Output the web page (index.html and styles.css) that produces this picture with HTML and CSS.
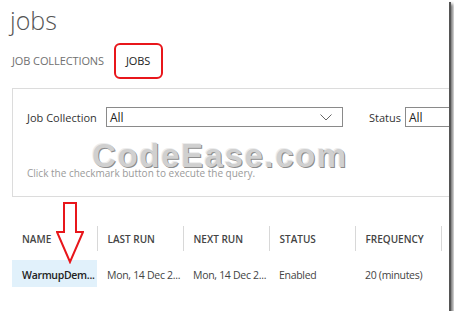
FILE: index.html
```html
<!DOCTYPE html>
<html lang="en">
<head>
  <meta charset="UTF-8">
  <title>jobs</title>
  <link rel="stylesheet" href="styles.css">
</head>
<body>
  <div class="frame">
    <h1 class="title">jobs</h1>

    <div class="tabs">
      <span class="tab">JOB COLLECTIONS</span>
      <span class="tab active">JOBS</span>
    </div>

    <div class="filter">
      <div class="filter-row">
        <label class="filter-label">Job Collection</label>
        <div class="select wide">
          <span>All</span>
          <svg class="chevron" width="12" height="7" viewBox="0 0 12 7"><path d="M0.5 0.5 L6 6 L11.5 0.5" fill="none" stroke="#666" stroke-width="1"/></svg>
        </div>
        <label class="filter-label status-label">Status</label>
        <div class="select narrow"><span>All</span></div>
      </div>
      <div class="watermark">CodeEase.com</div>
      <p class="hint">Click the checkmark button to execute the query.</p>
    </div>

    <div class="table-wrap">
      <svg class="arrow" width="28" height="62" viewBox="0 0 28 62">
        <path d="M8 1 H20 V30 H27 L14 60 L1 30 H8 Z" fill="none" stroke="#e8161b" stroke-width="2" stroke-linejoin="miter"/>
      </svg>
      <table class="jobs">
        <colgroup>
          <col class="col-first">
          <col class="col">
          <col class="col">
          <col class="col">
          <col class="col-last">
        </colgroup>
        <thead>
          <tr>
            <th>NAME</th>
            <th>LAST RUN</th>
            <th>NEXT RUN</th>
            <th>STATUS</th>
            <th>FREQUENCY</th>
          </tr>
        </thead>
        <tbody>
          <tr>
            <td class="selected">WarmupDem...</td>
            <td>Mon, 14 Dec 2...</td>
            <td>Mon, 14 Dec 2...</td>
            <td>Enabled</td>
            <td>20 (minutes)</td>
          </tr>
        </tbody>
      </table>
    </div>
  </div>
</body>
</html>
```

FILE: styles.css
```css
body {
  margin: 0;
  background: #fff;
  font-family: "Open Sans", "Noto Sans", Arial, sans-serif;
  color: #444;
  overflow: hidden;
}
.frame {
  width: 449px;
  height: 311px;
  background: #fff;
  box-shadow: 2px 2px 0 #555, 4px 4px 3px rgba(0, 0, 0, 0.55);
  overflow: hidden;
}
.title {
  margin: 0;
  padding: 2px 0 0 10px;
  height: 41px;
  font-size: 25px;
  font-weight: 300;
  line-height: 36px;
  color: #555;
}
.tabs {
  display: flex;
  align-items: center;
  gap: 10px;
  padding-left: 12px;
  height: 36px;
}
.tab {
  font-size: 11px;
  line-height: 14px;
  color: #707070;
  letter-spacing: -0.1px;
}
.tab.active {
  color: #222;
  border: 2px solid #e8161b;
  border-radius: 6px;
  padding: 9px 11px 9px 10px;
}
.filter {
  margin: 9px 0 0 12px;
  border: 1px solid #dcdcdc;
  border-right: none;
  height: 109px;
  padding: 18px 0 0 14px;
  box-sizing: border-box;
}
.filter-row {
  display: flex;
  align-items: center;
  height: 20px;
}
.filter-label {
  font-size: 11px;
  color: #333;
  width: 79px;
}
.status-label {
  width: 36px;
  margin-left: 26px;
}
.select {
  height: 20px;
  box-sizing: border-box;
  border: 1px solid #8a8a8a;
  display: flex;
  align-items: center;
  justify-content: space-between;
  padding: 0 10px 0 3px;
  font-size: 12px;
  color: #222;
}
.select.wide {
  width: 237px;
}
.select.narrow {
  flex: 1;
  border-right: none;
}
.watermark {
  font-family: "Liberation Sans", Arial, sans-serif;
  font-weight: bold;
  font-size: 33px;
  letter-spacing: 1.6px;
  color: #d0d0d0;
  text-shadow: 1px 1px 0 #8c8c8c, -1px -1px 0 #ececec;
  margin: 12px 0 0 65px;
  line-height: 33px;
  height: 27px;
}
.hint {
  margin: 0;
  font-size: 10px;
  line-height: 14px;
  color: #9a9a9a;
}
.table-wrap {
  position: relative;
  margin: 29px 0 0 12px;
}
.arrow {
  position: absolute;
  left: 44px;
  top: -24px;
}
.jobs {
  border-collapse: collapse;
  table-layout: fixed;
  width: 429px;
  font-size: 10.5px;
}
.col-first {
  width: 85px;
}
.col {
  width: 86px;
}
.col-last {
  width: 86px;
}
.jobs th {
  text-align: left;
  font-weight: 600;
  font-size: 10px;
  color: #444;
  padding: 0 0 0 10px;
  height: 25px;
  border-right: 1px solid #d8d8d8;
  border-bottom: 2px solid #dadada;
  vertical-align: middle;
}
.jobs td {
  padding: 2px 0 0 10px;
  height: 25px;
  color: #444;
  white-space: nowrap;
  letter-spacing: -0.3px;
}
.jobs tbody tr td {
  border-top: 9px solid #fff;
}
.jobs td.selected {
  background: #e1f1fb;
  color: #222;
  font-weight: 600;
}
```
